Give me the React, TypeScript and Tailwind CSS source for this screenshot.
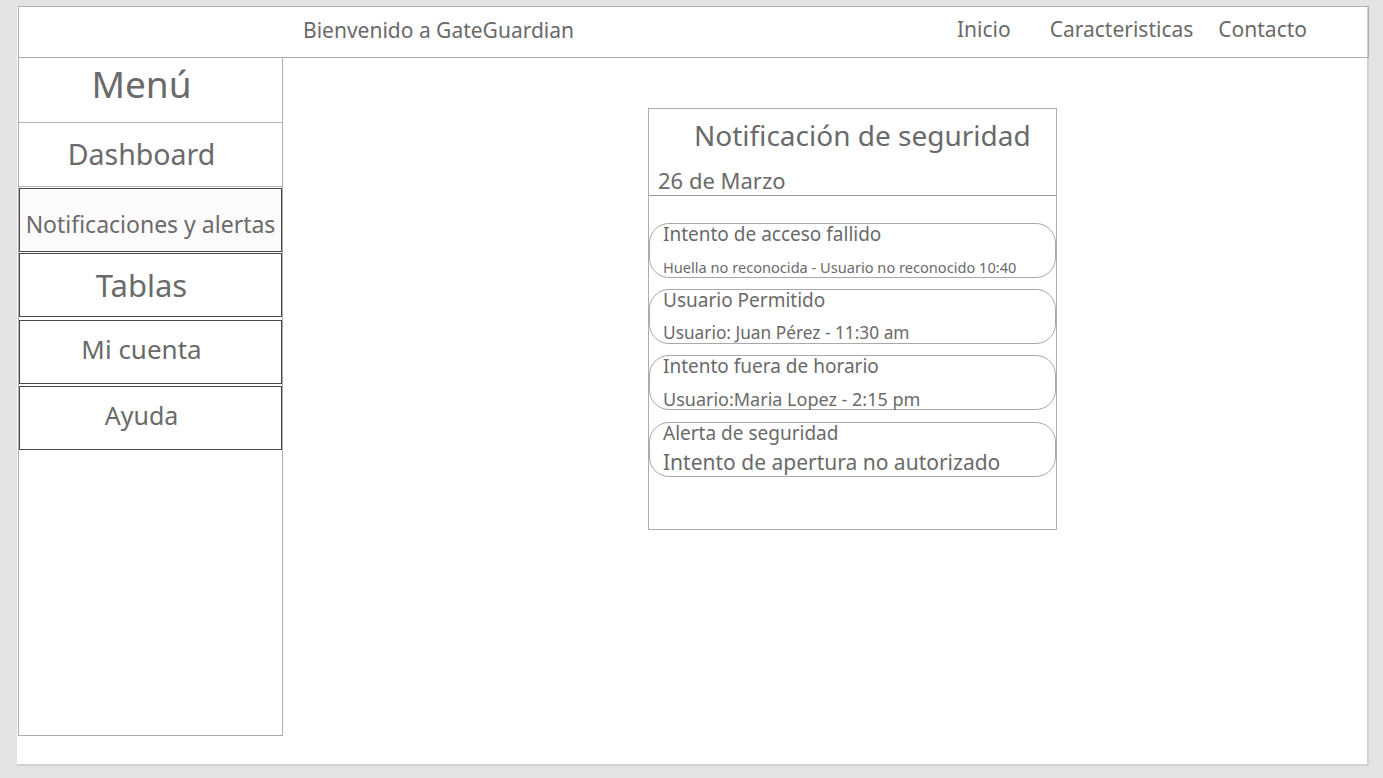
import React from "react";

const font = { fontFamily: '"Noto Sans", "Open Sans", sans-serif' };

const menu = [
  { label: "Menú", size: "text-[37px]", box: "h-[65px] pb-[14px] pr-[18px] border-b border-[#b4b4b4]" },
  { label: "Dashboard", size: "text-[28.5px]", box: "h-[64px] pr-[18px] border-b border-[#b4b4b4]" },
  { label: "Notificaciones y alertas", size: "text-[23px]", box: "h-[64px] pt-[8px] mt-px border border-[#4a4a4a] bg-[#fdfafb]" },
  { label: "Tablas", size: "text-[31px]", box: "h-[64px] pr-[18px] mt-px border border-[#4a4a4a]" },
  { label: "Mi cuenta", size: "text-[26px]", box: "h-[64px] pb-[7px] pr-[18px] mt-[3px] border border-[#4a4a4a]" },
  { label: "Ayuda", size: "text-[25px]", box: "h-[64px] pb-[6px] pr-[18px] mt-[2px] border border-[#4a4a4a]" },
];

const alerts = [
  { title: "Intento de acceso fallido", detail: "Huella no reconocida - Usuario no reconocido 10:40", detailSize: "text-[14.6px] mt-[16px]", box: "" },
  { title: "Usuario Permitido", detail: "Usuario: Juan Pérez - 11:30 am", detailSize: "text-[17.3px] mt-[14px]", box: "" },
  { title: "Intento fuera de horario", detail: "Usuario:Maria Lopez - 2:15 pm", detailSize: "text-[18px] mt-[14px]", box: "" },
  { title: "Alerta de seguridad", detail: "Intento de apertura no autorizado", detailSize: "text-[21px] mt-[9px]", box: "mt-px" },
];

export default function App() {
  return (
    <div className="min-h-screen bg-[#e3e3e3] pt-[6px] pl-[17px] text-[#6a6a6a]" style={font}>
      <div className="w-[1352px] h-[760px] bg-white border-r-2 border-b-2 border-[#d2d2d2] flex flex-col">
        {/* Header */}
        <div className="ml-px w-[1351px] h-[52px] border border-[#adadad] flex items-center">
          <span className="ml-[284px] text-[21px] -mt-[2px]">Bienvenido a GateGuardian</span>
          <nav className="ml-auto mr-[61px] flex items-center gap-[40px] text-[21px] -mt-[4px]">
            <span className="-mr-[1px]">Inicio</span>
            <span className="-mr-[15px]">Caracteristicas</span>
            <span>Contacto</span>
          </nav>
        </div>

        <div className="flex flex-1">
          {/* Sidebar */}
          <aside className="ml-px w-[265px] h-[678px] border border-t-0 border-[#adadad] flex flex-col">
            {menu.map((m) => (
              <div key={m.label} className={`flex items-center justify-center ${m.box}`}>
                <span className={`${m.size} leading-none`}>{m.label}</span>
              </div>
            ))}
          </aside>

          {/* Content */}
          <main className="flex-1 pl-[365px] pt-[50px]">
            <div className="w-[409px] h-[422px] border border-[#adadad]">
              <div className="h-[87px] border-b border-[#9a9a9a] flex flex-col">
                <h2 className="text-[28px] leading-none mt-[12px] pl-[45px]">Notificación de seguridad</h2>
                <span className="text-[22px] leading-none mt-[20px] pl-[9px]">26 de Marzo</span>
              </div>
              <div className="flex flex-col gap-[11px] pt-[27px]">
                {alerts.map((a) => (
                  <div key={a.title} className={`h-[55px] rounded-[20px] border border-[#a8a8a8] px-[13px] flex flex-col ${a.box}`}>
                    <span className="text-[19px] leading-none mt-[1px]">{a.title}</span>
                    <span className={`${a.detailSize} leading-none whitespace-nowrap`}>{a.detail}</span>
                  </div>
                ))}
              </div>
            </div>
          </main>
        </div>
      </div>
    </div>
  );
}
